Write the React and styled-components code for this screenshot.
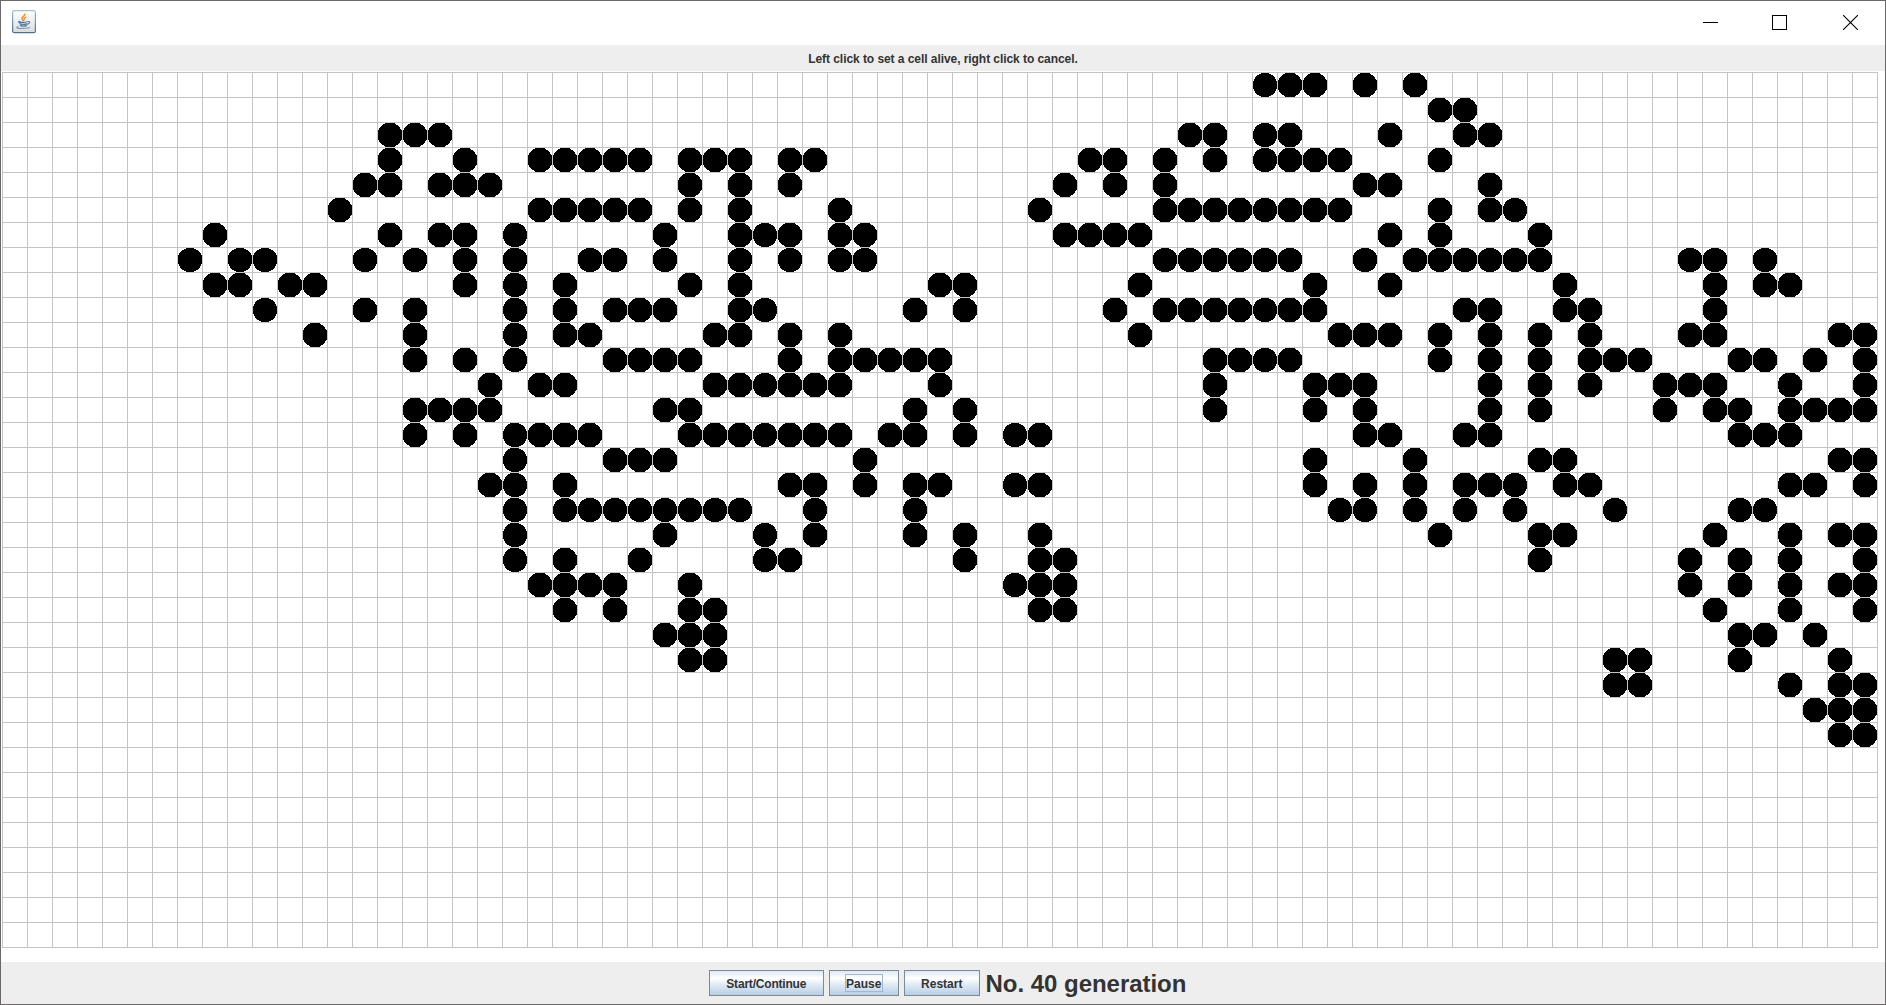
import React from 'react';
import styled, { createGlobalStyle } from 'styled-components';

const COLS = 75;
const ROWS = 35;
const CELL = 25;

const GENERATION = 40;

// Live columns of each row, from the top row down; "a-b" is an inclusive run.
const LIVE_ROWS = [
  '50-52 54 56',
  '57-58',
  '15-17 47-48 50-51 55 58-59',
  '15 18 21-25 27-29 31-32 43-44 46 48 50-53 57',
  '14-15 17-19 27 29 31 42 44 46 54-55 59',
  '13 21-25 27 29 33 41 46-53 57 59-60',
  '8 15 17-18 20 26 29-31 33-34 42-45 55 57 61',
  '7 9-10 14 16 18 20 23-24 26 29 31 33-34 46-51 54 56-61 67-68 70',
  '8-9 11-12 18 20 22 27 29 37-38 45 52 55 62 68 70-71',
  '10 14 16 20 22 24-26 29-30 36 38 44 46-52 58-59 62-63 68',
  '12 16 20 22-23 28-29 31 33 45 53-55 57 59 61 63 67-68 73-74',
  '16 18 20 24-27 31 33-37 48-51 57 59 61 63-65 69-70 72 74',
  '19 21-22 28-33 37 48 52-54 59 61 63 66-68 71 74',
  '16-19 26-27 36 38 48 52 54 59 61 66 68-69 71-74',
  '16 18 20-23 27-33 35-36 38 40-41 54-55 58-59 69-71',
  '20 24-26 34 52 56 61-62 73-74',
  '19-20 22 31-32 34 36-37 40-41 52 54 56 58-60 62-63 71-72 74',
  '20 22-29 32 36 53-54 56 58 60 64 69-70',
  '20 26 30 32 36 38 41 57 61-62 68 71 73-74',
  '20 22 25 30-31 38 41-42 61 67 69 71 74',
  '21-24 27 40-42 67 69 71 73-74',
  '22 24 27-28 41-42 68 71 74',
  '26-28 69-70 72',
  '27-28 64-65 69 73',
  '64-65 71 73-74',
  '72-74',
  '73-74',
];

const liveCells = LIVE_ROWS.flatMap((line, row) =>
  line.split(' ').flatMap((token) => {
    const [from, to = from] = token.split('-').map(Number);
    return Array.from({ length: to - from + 1 }, (_, i) => ({ row, col: from + i }));
  })
);

const GlobalStyle = createGlobalStyle`
  * { box-sizing: border-box; }
  body {
    margin: 0;
    overflow: hidden;
    background: #ffffff;
    font-family: "Liberation Sans", Arial, sans-serif;
  }
`;

const Window = styled.div`
  display: flex;
  flex-direction: column;
  width: 1886px;
  height: 1005px;
  border: 1px solid #6a6869;
  background: #ffffff;
  color: #333333;
`;

const TitleBar = styled.header`
  display: flex;
  flex: none;
  align-items: flex-start;
  justify-content: space-between;
  height: 44px;
  padding: 9px 0 0 11px;
`;

const AppIcon = styled.svg`
  display: block;
  width: 24px;
  height: 24px;
`;

const WindowControls = styled.div`
  display: flex;
  gap: 54px;
  padding: 5px 27px 0 0;
`;

const ControlGlyph = styled.svg`
  display: block;
  width: 15px;
  height: 15px;
  margin-right: ${(p) => p.$after || 0}px;
  fill: none;
  stroke: #000000;
  stroke-width: ${(p) => p.$weight || 1};
`;

const HintBar = styled.div`
  display: flex;
  flex: none;
  align-items: center;
  justify-content: center;
  height: 26px;
  padding-top: 2px;
  background: #eeeeee;
  font-size: 12px;
  font-weight: 700;
  line-height: 16px;
  letter-spacing: -0.06px;
`;

const BoardArea = styled.main`
  flex: 1;
  min-height: 0;
  padding: 1px 0 0 1px;
`;

const Board = styled.div`
  display: grid;
  grid-template-columns: repeat(${COLS}, ${CELL}px);
  grid-template-rows: repeat(${ROWS}, ${CELL}px);
  width: ${COLS * CELL + 1}px;
  height: ${ROWS * CELL + 1}px;
  background-image:
    linear-gradient(to right, #c4c4c4 1px, transparent 1px),
    linear-gradient(to bottom, #c4c4c4 1px, transparent 1px);
  background-size: ${CELL}px ${CELL}px;
`;

const Disc = styled.svg`
  display: block;
  width: 24px;
  height: 24px;
  margin: 1px 0 0 1px;
  overflow: hidden;
  fill: #000000;
  shape-rendering: crispEdges;
`;

const Controls = styled.footer`
  display: flex;
  flex: none;
  align-items: flex-start;
  gap: 5px;
  height: 42px;
  padding: 8px 0 0 708px;
  background: #eeeeee;
`;

const Button = styled.button`
  display: flex;
  align-items: center;
  justify-content: center;
  width: ${(p) => p.$width}px;
  height: 26px;
  padding: 0;
  border: 1px solid #7a8a99;
  border-radius: 0;
  outline: none;
  background: linear-gradient(#dde8f3 0%, #ffffff 30%, #dde8f3 60%, #b8cfe5 100%);
  color: #333333;
  font: 700 12px/14px "Liberation Sans", Arial, sans-serif;
  letter-spacing: ${(p) => p.$tracking || 0}px;
`;

const ButtonLabel = styled.span`
  padding: 2px 1px 0 0.5px;
  border: 1px solid ${(p) => (p.$focused ? '#a3b8cc' : 'transparent')};
  white-space: nowrap;
`;

const GenerationLabel = styled.div`
  padding-left: 0.5px;
  font-size: 24px;
  font-weight: 700;
  line-height: 27px;
  letter-spacing: -0.03px;
  white-space: nowrap;
`;

function JavaIcon() {
  return (
    <AppIcon viewBox="0 0 24 24">
      <defs>
        <linearGradient id="tile" x1="0" y1="0" x2="0" y2="1">
          <stop offset="0" stopColor="#ffffff" />
          <stop offset="1" stopColor="#d9dcdf" />
        </linearGradient>
        <linearGradient id="rim" x1="0" y1="0" x2="0" y2="1">
          <stop offset="0" stopColor="#a9bfcc" />
          <stop offset="1" stopColor="#4a7087" />
        </linearGradient>
      </defs>
      <rect x="0.6" y="0.7" width="22.8" height="22" rx="1.8" fill="url(#tile)" stroke="url(#rim)" strokeWidth="1.2" />
      <g fill="none" strokeLinecap="round">
        <path d="M12.7 4.2c.8 1.6-3.2 2.7-2.7 4.6.2.8 1 1.4 1.3 2" stroke="#ee8b28" strokeWidth="1.5" />
        <path d="M14.1 7.1c-2.2.9-2.3 1.8-1.5 2.7" stroke="#ee8b28" strokeWidth="1.1" />
        <path d="M8 11.3c-3 .9-1.7 1.2 3.2 1.1 1.7 0 3.1-.3 4.2-.6" stroke="#527b9c" strokeWidth="1.1" />
        <path d="M7.8 13.7c.7.8 5.3.8 7.1.1M8.6 15.6c1.2.8 4.5.7 5.8.1" stroke="#527b9c" strokeWidth="1.3" />
        <path d="M16.3 11.5c2.1-.4 1.5 2.2-.7 2.8" stroke="#527b9c" strokeWidth="1.1" />
        <path d="M6.2 16.8c-3.8 1.3 1 1.8 5 1.7 3.3-.1 5.4-.5 6.1-1.1" stroke="#7594ac" strokeWidth="1.1" />
      </g>
    </AppIcon>
  );
}

export default function App() {
  return (
    <>
      <GlobalStyle />
      <Window>
        <TitleBar>
          <JavaIcon />
          <WindowControls>
            <ControlGlyph viewBox="0 0 15 15">
              <path d="M0 7.5h15" />
            </ControlGlyph>
            <ControlGlyph viewBox="0 0 15 15" $after={2}>
              <rect x="0.5" y="0.5" width="14" height="14" />
            </ControlGlyph>
            <ControlGlyph viewBox="0 0 15 15" $weight={1.1}>
              <path d="M0 0l15 15M15 0L0 15" />
            </ControlGlyph>
          </WindowControls>
        </TitleBar>
        <HintBar>Left click to set a cell alive, right click to cancel.</HintBar>
        <BoardArea>
          <Board>
            {liveCells.map(({ row, col }) => (
              <Disc
                key={`${row}-${col}`}
                viewBox="0 0 24 24"
                style={{ gridRow: row + 1, gridColumn: col + 1 }}
              >
                <circle cx="12" cy="12" r="12.35" />
              </Disc>
            ))}
          </Board>
        </BoardArea>
        <Controls>
          <Button $width={115} $tracking={-0.2}><ButtonLabel>Start/Continue</ButtonLabel></Button>
          <Button $width={70}><ButtonLabel $focused>Pause</ButtonLabel></Button>
          <Button $width={76}><ButtonLabel>Restart</ButtonLabel></Button>
          <GenerationLabel>No. {GENERATION} generation</GenerationLabel>
        </Controls>
      </Window>
    </>
  );
}
